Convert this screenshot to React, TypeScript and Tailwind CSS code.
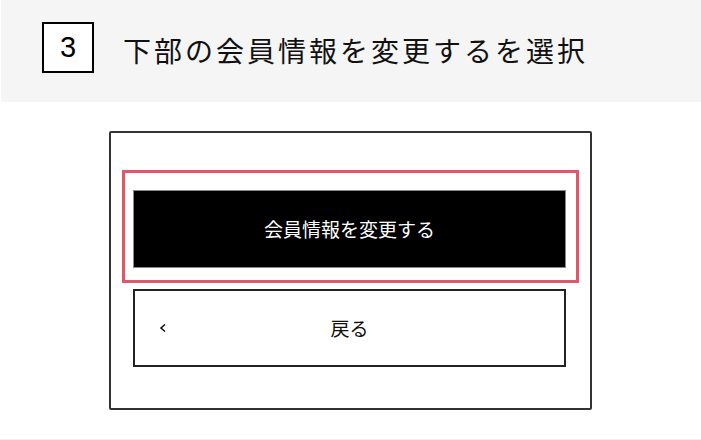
import React from "react";

export default function App() {
  const font = { fontFamily: '"Noto Sans CJK JP", "Noto Sans", sans-serif' };
  return (
    <div className="w-[701px] h-[440px] bg-white overflow-hidden" style={font}>
      <div className="ml-px h-[102px] bg-[#f5f5f5] flex items-center pl-[41px] pb-[2px]">
        <div
          className="w-[52px] h-[51px] mb-[5px] border-2 border-black bg-white flex items-center justify-center text-[29px] text-black"
          style={{ fontFamily: '"Liberation Sans", Arial, sans-serif' }}
        >
          3
        </div>
        <div className="ml-[29px] text-[28px] tracking-[3px] text-[#111] leading-none">
          下部の会員情報を変更するを選択
        </div>
      </div>
      <div className="mt-[29px] mx-auto w-[483px] h-[279px] border-2 border-[#333] rounded-[2px] pt-[57px] pl-[22px] pr-[24px] flex flex-col gap-[21px]">
        <div className="relative">
          <div className="absolute -left-[11px] -right-[13px] -top-[20px] -bottom-[15px] border-[3px] border-[#e2566a] pointer-events-none" />
          <button className="w-full h-[78px] bg-black border border-[#888] text-white text-[19px] flex items-center justify-center">
            会員情報を変更する
          </button>
        </div>
        <button className="relative w-full h-[78px] bg-white border-2 border-[#222] text-[#111] text-[19px] flex items-center justify-center">
          <svg
            className="absolute left-[24px] top-1/2 -translate-y-1/2"
            width="8"
            height="10"
            viewBox="0 0 8 10"
          >
            <polyline points="6,1.5 2,5 6,8.5" fill="none" stroke="#111" strokeWidth="1.6" />
          </svg>
          戻る
        </button>
      </div>
      <div className="mt-[29px] h-px bg-[#eeeeee]" />
    </div>
  );
}
